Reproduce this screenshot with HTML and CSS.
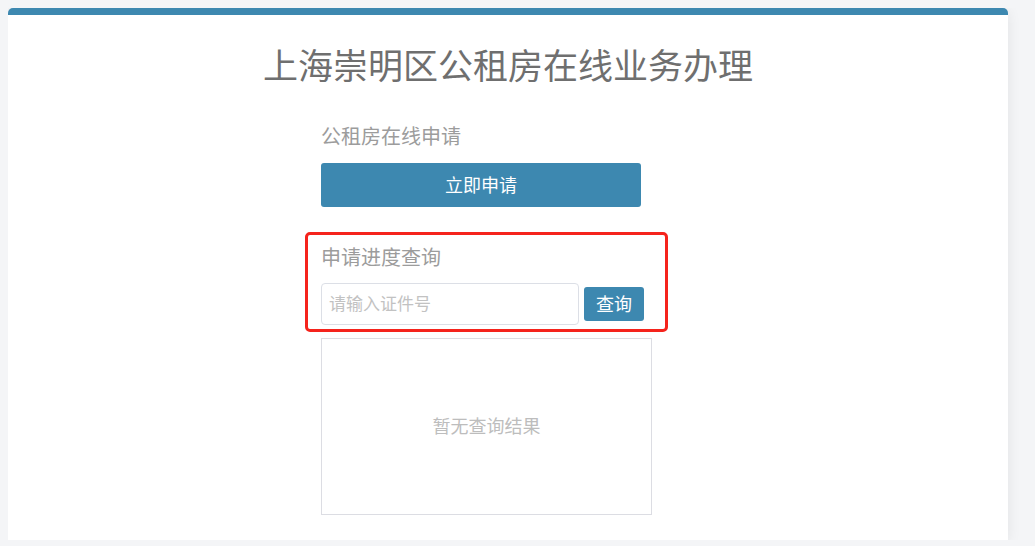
FILE: index.html
```html
<!DOCTYPE html>
<html lang="zh-CN">
<head>
<meta charset="utf-8">
<title>上海崇明区公租房在线业务办理</title>
<link rel="stylesheet" href="styles.css">
</head>
<body>
<div class="card">
  <h1 class="title">上海崇明区公租房在线业务办理</h1>
  <div class="column">
    <div class="label apply-label">公租房在线申请</div>
    <button class="btn btn-apply" type="button">立即申请</button>
    <div class="query">
      <div class="label">申请进度查询</div>
      <div class="query-row">
        <input class="id-input" type="text" placeholder="请输入证件号">
        <button class="btn btn-query" type="button">查询</button>
      </div>
    </div>
    <div class="result">暂无查询结果</div>
  </div>
</div>
</body>
</html>
```
FILE: styles.css
```css
html, body {
  margin: 0;
  padding: 0;
}
body {
  margin: 8px;
  background: #f4f5f7;
  font-family: "Noto Sans CJK SC", "Noto Sans", sans-serif;
}
.card {
  width: 1000px;
  box-sizing: border-box;
  background: #fff;
  border-top: 7px solid #3d88b0;
  border-radius: 5px 5px 0 0;
  box-shadow: 0 2px 14px rgba(0, 0, 0, 0.08);
  padding-bottom: 25px;
}
.title {
  margin: 29px 0 0;
  font-size: 35px;
  line-height: 40px;
  font-weight: normal;
  color: #6f6f6f;
  text-align: center;
}
.column {
  width: 331px;
  margin-left: 313px;
}
.label {
  font-size: 20px;
  line-height: 28px;
  color: #9c9c9c;
}
.apply-label {
  margin-top: 38px;
}
.btn {
  border: none;
  background: #3d88b0;
  color: #fff;
  font-family: inherit;
  font-size: 18px;
  line-height: 1;
  border-radius: 3px;
  padding: 0 0 2px;
  cursor: pointer;
}
.btn-apply {
  display: block;
  width: 320px;
  height: 44px;
  margin-top: 13px;
}
.query {
  position: relative;
  margin-top: 26px;
  padding-top: 10px;
}
.query::after {
  content: "";
  position: absolute;
  top: -1px;
  left: -16px;
  right: -16px;
  bottom: -7px;
  border: 3px solid #f5231c;
  border-radius: 5px;
  pointer-events: none;
}
.query-row {
  display: flex;
  align-items: center;
  gap: 5px;
  margin-top: 12px;
}
.id-input {
  width: 258px;
  height: 42px;
  box-sizing: border-box;
  border: 1px solid #dcdfe6;
  border-radius: 4px;
  padding: 0 7px 3px;
  font-family: inherit;
  font-size: 17px;
  color: #555;
  outline: none;
}
.id-input::placeholder {
  color: #c2c2c2;
}
.btn-query {
  width: 60px;
  height: 34px;
}
.result {
  margin-top: 13px;
  height: 177px;
  box-sizing: border-box;
  border: 1px solid #dcdde3;
  padding-bottom: 3px;
  display: flex;
  align-items: center;
  justify-content: center;
  font-size: 18px;
  color: #bdbdbd;
}
```
